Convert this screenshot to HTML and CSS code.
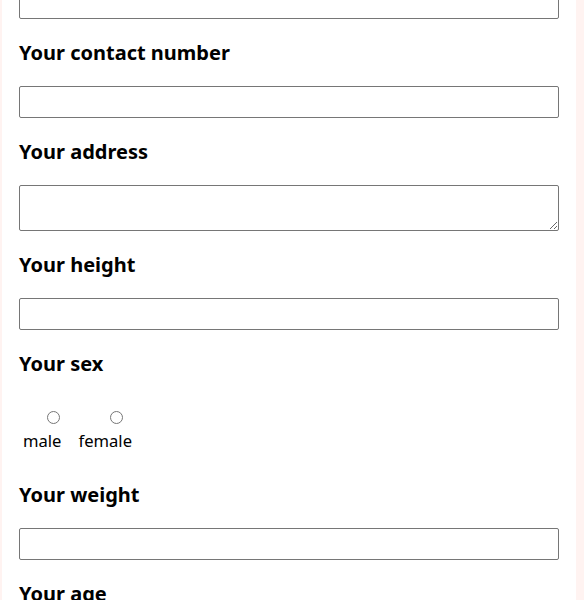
FILE: index.html
```html
<!DOCTYPE html>
<html>
<head>
<meta charset="utf-8">
<link rel="stylesheet" href="styles.css">
</head>
<body>
<div class="page">
  <form class="form">
    <input class="field first" type="text">
    <label class="label">Your contact number</label>
    <input class="field" type="text">
    <label class="label">Your address</label>
    <textarea class="area"></textarea>
    <label class="label">Your height</label>
    <input class="field" type="text">
    <label class="label">Your sex</label>
    <div class="radios">
      <div class="opt"><input class="radio" type="radio" name="sex" id="m"><label for="m">male</label></div>
      <div class="opt"><input class="radio" type="radio" name="sex" id="f"><label for="f">female</label></div>
    </div>
    <label class="label">Your weight</label>
    <input class="field" type="text">
    <label class="label">Your age</label>
    <input class="field" type="text">
  </form>
</div>
</body>
</html>
```
FILE: styles.css
```css
html, body {
  margin: 0;
  padding: 0;
  background: #fff3f1;
}
.page {
  background: #ffffff;
  width: 574px;
  margin-left: 2px;
  min-height: 700px;
  box-sizing: border-box;
  padding: 0 17px;
  font-family: "Noto Sans", sans-serif;
  color: #000;
}
.form {
  display: flex;
  flex-direction: column;
  margin-top: -13px;
}
.field {
  display: block;
  width: 540px;
  height: 32px;
  box-sizing: border-box;
  border: 1px solid #767676;
  border-radius: 2px;
  margin: 0;
  font-family: "Noto Sans", sans-serif;
  font-size: 16px;
}
.area {
  display: block;
  width: 540px;
  height: 46px;
  box-sizing: border-box;
  border: 1px solid #767676;
  border-radius: 2px;
  margin: 0;
  font-family: "Noto Sans", sans-serif;
}
.label {
  display: block;
  font-size: 20px;
  font-weight: 700;
  line-height: 27px;
  margin: 20px 0 20px;
}
.radios {
  display: flex;
  gap: 17px;
  padding: 14px 0 9px 4px;
}
.opt {
  display: flex;
  flex-direction: column;
  align-items: center;
  font-size: 16.6px;
  line-height: 22px;
}
.radio {
  width: 13px;
  height: 13px;
  margin: 0 0 6px 22px;
}
```
